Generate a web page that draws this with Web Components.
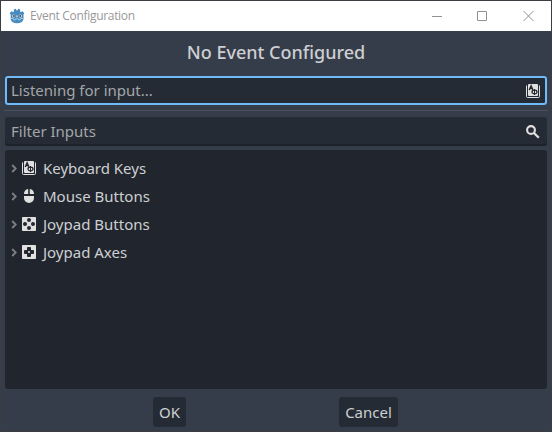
<!DOCTYPE html>
<html lang="en"><head><meta charset="utf-8"><title>Event Configuration</title>
<style>html,body{margin:0;width:552px;height:432px;overflow:hidden}body{font:15px/20px "Noto Sans","Open Sans",sans-serif;color:#cdcfd2}</style></head>
<body>
<event-dialog>
 <window-bar slot="bar">Event Configuration</window-bar>
 <dialog-title>No Event Configured</dialog-title>
 <input-field class="listen" active>Listening for input...<ui-icon slot="icon" name="keyboard"></ui-icon></input-field>
 <line-separator></line-separator>
 <input-field>Filter Inputs<ui-icon slot="icon" name="search"></ui-icon></input-field>
 <input-tree>
  <tree-row icon="keyboard">Keyboard Keys</tree-row>
  <tree-row icon="mouse">Mouse Buttons</tree-row>
  <tree-row icon="buttons">Joypad Buttons</tree-row>
  <tree-row icon="axes">Joypad Axes</tree-row>
 </input-tree>
 <dialog-button slot="ok" style="--w:33px">OK</dialog-button>
 <dialog-button slot="cancel" style="--w:59px">Cancel</dialog-button>
</event-dialog>
<script>
const define=(name,html,setup)=>customElements.define(name,class extends HTMLElement{
 connectedCallback(){
  if(this.shadowRoot)return;
  const t=document.createElement('template');t.innerHTML=html;
  this.attachShadow({mode:'open'}).append(t.content.cloneNode(true));
  if(setup)setup(this);
 }});
const icons={
 keyboard:`<path d="M1.5 2.500v11q0 1 1 1h11q1 0 1-1v-11" fill="none" stroke="#e0e0e0" stroke-width="1"/><path d="M4 1h8q1 0 1 1v10q0 1-1 1H4q-1 0-1-1V2q0-1 1-1z" fill="#e0e0e0"/><path d="M4.200 7 6.100 2.700 8 7M5 5.500h2.300" fill="none" stroke="#22272f" stroke-width="1.300"/><ellipse cx="9.500" cy="9" rx="2.500" ry="1.800" fill="none" stroke="#22272f" stroke-width="1.200"/><path d="M9.500 6v6" stroke="#22272f"/>`,
 search:`<circle cx="6" cy="6" r="3.9" fill="none" stroke="#e0e0e0" stroke-width="2.1"/><path d="m9 9 4.8 4.8" stroke="#e0e0e0" stroke-width="2.3"/>`,
 mouse:`<path d="M7.200 1v5H3V5.600Q3.200 1.800 7.200 1zM8.800 1v5H13V5.600Q12.800 1.800 8.800 1zM3 8h10v2a5 5 0 0 1-10 0z" fill="#e0e0e0"/>`,
 buttons:`<rect x="1" y="1" width="14" height="14" rx=".8" fill="#e0e0e0"/><g fill="#22272f"><circle cx="8" cy="4" r="2"/><circle cx="12" cy="8" r="2"/><circle cx="8" cy="12" r="2"/><circle cx="4" cy="8" r="2"/></g>`,
 axes:`<rect x="1" y="1" width="14" height="14" rx=".8" fill="#e0e0e0"/><path d="M7 3h2q1 0 1 1v2h2q1 0 1 1v2q0 1-1 1h-2v2q0 1-1 1H7q-1 0-1-1v-2H4q-1 0-1-1V7q0-1 1-1h2V4q0-1 1-1z" fill="#22272f"/><circle cx="8" cy="8" r="1.1" fill="#e0e0e0"/>`};
define('ui-icon','<style>:host{display:block;width:16px;height:16px;flex:none}svg{display:block}</style><svg width="16" height="16" viewBox="0 0 16 16"></svg>',e=>e.shadowRoot.querySelector('svg').innerHTML=icons[e.getAttribute('name')]);
define('window-bar',`<style>
:host{display:flex;align-items:center;height:30px;box-sizing:border-box;background:#fff;color:#999;font:12px/16px "Open Sans",sans-serif;padding-left:8px}
.logo{margin:0 5px 1px 0;flex:none}.label{flex:1;letter-spacing:-.31px;white-space:nowrap}.controls{display:flex;gap:35px;margin-right:17px}
.controls svg{display:block;fill:none;stroke:#929292;stroke-width:1}.controls svg:last-child{margin-left:1px}</style>
<svg class="logo" width="16" height="16" viewBox="0 0 16 16"><path d="M.8 5.200 2.300 3.300 4 4l1-.5-.2-2L6.700.8l.7 1.500h1.200L9.300.8l1.900.7-.2 2 1 .5 1.700-.7 1.500 1.900-.7 1.300v4.800Q13.500 15.200 8 15.200t-6.300-3.900V6.500z" fill="#478cbf"/><path d="M2 10.500h2.300l.4 1.300h1.700l.4-1h2.400l.4 1h1.700l.4-1.300H14" fill="none" stroke="#d8e8f2" stroke-width=".6"/><circle cx="4.700" cy="8" r="1.500" fill="#fff"/><circle cx="11.300" cy="8" r="1.500" fill="#fff"/><circle cx="4.900" cy="8" r="1" fill="#414042"/><circle cx="11.100" cy="8" r="1" fill="#414042"/><path d="M8 7.400v1.800" stroke="#fff"/></svg>
<span class="label"><slot></slot></span>
<span class="controls"><svg width="10" height="10"><path d="M0 5.500h10"/></svg><svg width="10" height="10"><path d="M.5.5h9v9h-9z"/></svg><svg width="11" height="10"><path d="m.5 0 10 10M10.500 0l-10 10"/></svg></span>`);
define('dialog-title','<style>:host{display:block;height:41px;line-height:35px;text-align:center;font-size:18px;font-weight:500;white-space:nowrap}</style><slot></slot>');
define('input-field',`<style>:host{display:flex;align-items:center;justify-content:space-between;box-sizing:border-box;height:29px;margin:0 1px;padding:0 6px;border-radius:3px;background:#252b34;color:#a3a6aa;box-shadow:inset 0 -2px #1e232a;white-space:nowrap}:host([active]){box-shadow:inset 0 0 0 2px #70bafa}span{padding-bottom:2px}</style><span><slot></slot></span><slot name="icon"></slot>`);
define('line-separator','<style>:host{display:block;height:1px;background:#4b515d;margin:5px 0 6px}</style>');
define('input-tree','<style>:host{display:block;box-sizing:border-box;height:239px;margin:4px 1px 0;padding:4px 6px;background:#21262e;border-radius:3px}</style><slot></slot>');
define('tree-row','<style>:host{display:flex;align-items:center;height:28px}.arrow{margin-right:4px}.label{margin-left:6px}</style><svg class="arrow" width="6" height="9" viewBox="0 0 6 9"><path d="m1.200 1 3.500 3.500L1.200 8" fill="none" stroke="#7b7e82" stroke-width="1.900"/></svg><ui-icon></ui-icon><span class="label"><slot></slot></span>',e=>{const old=e.shadowRoot.querySelector('ui-icon'),i=document.createElement('ui-icon');i.setAttribute('name',e.getAttribute('icon'));old.replaceWith(i)});
define('dialog-button','<style>:host{display:flex;align-items:center;justify-content:center;width:var(--w);height:30px;background:#252b34;border-radius:3px}</style><slot></slot>');
define('event-dialog',`<style>:host{display:flex;flex-direction:column;box-sizing:border-box;width:552px;height:432px;border:1px solid #3c3d42;background:#363d4a}main{padding:4px 3px 0}footer{display:flex;gap:153px;padding:8px 0 0 152px}</style><slot name="bar"></slot><main><slot></slot></main><footer><slot name="ok"></slot><slot name="cancel"></slot></footer>`);
</script></body></html>
